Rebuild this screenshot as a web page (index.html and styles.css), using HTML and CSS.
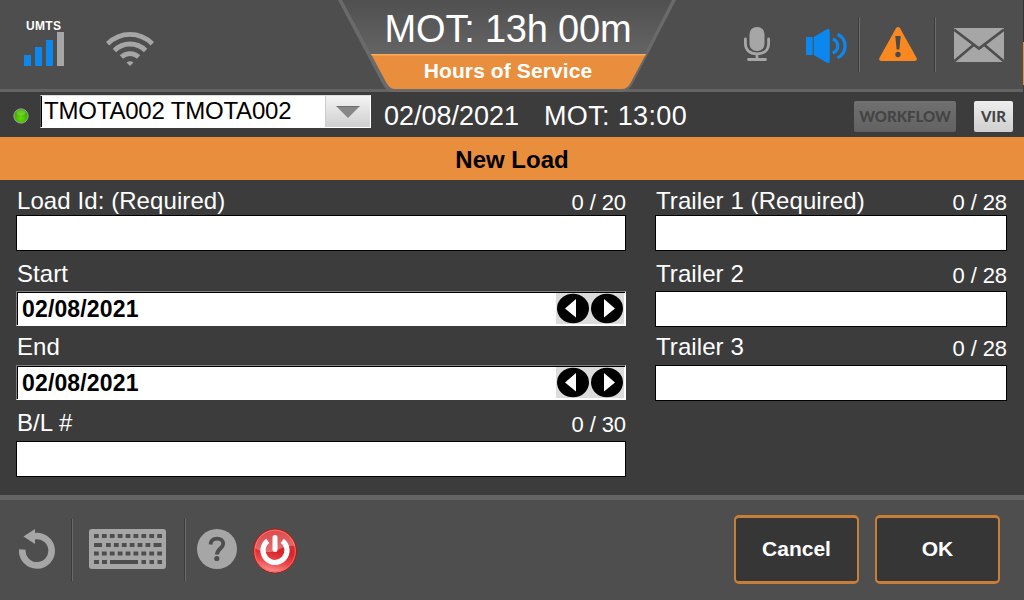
FILE: index.html
```html
<!DOCTYPE html>
<html lang="en">
<head>
<meta charset="utf-8">
<title>New Load</title>
<link rel="stylesheet" href="styles.css">
</head>
<body>
<div class="screen">
  <header class="topbar">
    <div class="status">
      <div class="signal">
        <span class="signal-label">UMTS</span>
        <svg width="40" height="34" viewBox="0 0 40 34"><g fill="#0b87ee"><path d="M0 23h7v11H0zM11 15h7v19h-7zM22 8h7v26h-7z"/></g><path fill="#a6a6a6" d="M33 0h7v34h-7z"/></svg>
      </div>
      <svg class="wifi" width="48" height="34" viewBox="0 0 48 34"><g fill="none" stroke="#a6a6a6" stroke-width="4.8"><path d="M1.600 11.700Q11.500 2.400 24 2.400t22.400 9.300"/><path d="M8.400 18.500Q15 12 24 12t15.600 6.500"/><path d="M15.400 25Q19 21.600 24 21.600t8.600 3.400"/></g><path fill="#a6a6a6" d="M20.500 30.500q3.500-2.600 7 0L24 34z"/></svg>
    </div>
    <div class="hos">
      <svg class="hos-shape" width="340" height="92" viewBox="0 0 340 92">
        <defs>
          <linearGradient id="tab" x1="0" y1="0" x2="0" y2="1"><stop offset="0" stop-color="#505050"/><stop offset="1" stop-color="#646464"/></linearGradient>
        </defs>
        <path fill="#6a6a6a" d="M0 0h338l-43 83q-4 8-11 9H55q-7-1-11-9z"/>
        <path fill="url(#tab)" d="M4 0h330l-27.500 54H33z"/>
        <path fill="#e98e3d" d="M33 54h275l-15.500 29q-3.500 6-8.500 6H57q-5 0-8.500-6z"/>
        <path fill="#fba95c" d="M33 54h275l-.8 1.500H33.800z"/>
      </svg>
      <div class="hos-time">MOT: 13h 00m</div>
      <div class="hos-name">Hours of Service</div>
    </div>
    <div class="tools">
      <svg class="mic" width="26" height="34" viewBox="0 0 26 34"><rect x="5.500" width="15" height="24" rx="7" fill="#a6a6a6"/><path fill="none" stroke="#a6a6a6" stroke-width="2.800" stroke-linecap="round" d="M1.400 12v4.500c0 6 4 10.300 11.600 10.300s11.600-4.300 11.600-10.300V12M13 27v5M4.500 32.500h17"/></svg>
      <svg class="speaker" width="42" height="34" viewBox="0 0 42 34"><path fill="#0b87ee" d="M0 8h6.700v18H0zM7.700 8L20.500.5Q23.800-.8 23.800 2v30q0 2.800-3.300 1.500L7.700 26z"/><g fill="none" stroke="#0b87ee" stroke-width="3.300"><path d="M26.700 10A7.400 7.400 0 0 1 26.700 24M31.500 5.200A13 13 0 0 1 31.500 28.800"/></g></svg>
      <i class="rule rule-top"></i>
      <svg class="warn" width="38" height="34" viewBox="0 0 38 34"><path fill="#fa8820" d="M17 1.300q2-2.600 4 0l16.500 29.500Q38.500 34 35.500 34h-33Q-.5 34 .5 30.800z"/><path fill="#4a4a4a" d="M16.300 9h5.400l-1.300 13.500h-2.800z"/><circle cx="19" cy="27.500" r="2.700" fill="#4a4a4a"/></svg>
      <i class="rule rule-top"></i>
      <svg class="mail" width="50" height="34" viewBox="0 0 50 34"><path fill="#a6a6a6" d="M0 0h50v34H0z"/><path fill="none" stroke="#4e4e4e" stroke-width="2.600" d="M0 1.500L25 20.500 50 1.500M0 33.500l19.500-16.500M50 33.500L30.500 17"/></svg>
    </div>
    <i class="edge"></i>
  </header>

  <section class="driverbar">
    <svg class="led" width="16" height="16" viewBox="0 0 16 16"><defs><radialGradient id="led" cy=".65"><stop offset="0" stop-color="#5fe000"/><stop offset="1" stop-color="#3fa800"/></radialGradient></defs><circle cx="8" cy="8" r="7.100" fill="url(#led)" stroke="#a2ac9c"/><ellipse cx="8" cy="4.800" rx="4.500" ry="2.600" fill="#8be055" opacity=".5"/></svg>
    <div class="select"><span class="select-text">TMOTA002 TMOTA002</span><span class="select-arrow"><svg width="24" height="12" viewBox="0 0 24 12"><path fill="#878787" d="M1 1h22L12 12z"/><path fill="#6d6d6d" d="M0 0h24l-1 1H1z"/></svg></span></div>
    <span class="date">02/08/2021</span>
    <span class="mot">MOT: 13:00</span>
    <button class="workflow">WORKFLOW</button>
    <button class="vir">VIR</button>
  </section>

  <h1 class="title">New Load</h1>

  <main class="form">
    <div class="col">
      <label class="label"><span>Load Id: (Required)</span><span class="count">0 / 20</span></label>
      <div class="box"></div>
      <label class="label mid"><span>Start</span></label>
      <div class="datebox"><span class="value">02/08/2021</span><span class="spin"><svg width="68" height="31" viewBox="0 0 68 31"><ellipse cx="17" cy="15.500" rx="16" ry="14.700"/><ellipse cx="51" cy="15.500" rx="16" ry="14.700"/><path fill="#fff" d="M20 6v18.500L9 15.500zM48 6v18.500L59 15.500z"/></svg></span></div>
      <label class="label low"><span>End</span></label>
      <div class="datebox"><span class="value">02/08/2021</span><span class="spin"><svg width="68" height="31" viewBox="0 0 68 31"><ellipse cx="17" cy="15.500" rx="16" ry="14.700"/><ellipse cx="51" cy="15.500" rx="16" ry="14.700"/><path fill="#fff" d="M20 6v18.500L9 15.500zM48 6v18.500L59 15.500z"/></svg></span></div>
      <label class="label last"><span>B/L #</span><span class="count">0 / 30</span></label>
      <div class="box"></div>
    </div>
    <div class="col">
      <label class="label"><span>Trailer 1 (Required)</span><span class="count">0 / 28</span></label>
      <div class="box"></div>
      <label class="label mid"><span>Trailer 2</span><span class="count">0 / 28</span></label>
      <div class="box"></div>
      <label class="label third"><span>Trailer 3</span><span class="count">0 / 28</span></label>
      <div class="box"></div>
    </div>
  </main>

  <footer class="footer">
    <svg class="undo" width="36" height="40" viewBox="0 0 36 40"><path fill="none" stroke="#a6a6a6" stroke-width="6.600" d="M3.300 20.500A14.700 14.700 0 1 0 15 7.300"/><path fill="#a6a6a6" d="M4.500 7.500L16 0v15z"/></svg>
    <i class="rule rule-a"></i>
    <svg class="keyboard" width="77" height="40" viewBox="0 0 77 40"><rect width="77" height="40" rx="3" fill="#a6a6a6"/><g fill="none" stroke="#4e4e4e" stroke-width="4"><path stroke-dasharray="4.800 3.100" d="M5 7h68"/><path d="M5 16h8M64.500 16h8"/><path stroke-dasharray="4.800 3.100" d="M17 16h45"/><path stroke-dasharray="4.800 3.100" d="M5 24.500h68"/><path d="M5 33h5M13 33h5M21 33h28M52.500 33h4.500M60.500 33h4.500M68.500 33h4.500"/></g></svg>
    <i class="rule rule-b"></i>
    <svg class="help" width="40" height="40" viewBox="0 0 40 40"><circle cx="20" cy="20" r="20" fill="#a6a6a6"/><path fill="none" stroke="#4e4e4e" stroke-width="3.800" d="M13.500 15.500c.3-3.800 2.700-5.900 6.500-5.900 3.700 0 6.200 2.100 6.200 5.200 0 4.600-6.200 5-6.200 10.700"/><circle cx="19.800" cy="29.500" r="2.600" fill="#4e4e4e"/></svg>
    <svg class="power" width="44" height="46" viewBox="0 0 44 46"><defs><linearGradient id="pw" x1=".6" y1="0" x2=".4" y2="1"><stop offset="0" stop-color="#dc4444"/><stop offset=".5" stop-color="#d8232a"/><stop offset=".75" stop-color="#ea4a4d"/><stop offset="1" stop-color="#ff9a9a"/></linearGradient><linearGradient id="gl" x1="0" y1="0" x2="0" y2="1"><stop offset="0" stop-color="#fff" stop-opacity=".05"/><stop offset="1" stop-color="#fff" stop-opacity=".36"/></linearGradient></defs><ellipse cx="22" cy="23" rx="21.500" ry="22" fill="url(#pw)" stroke="#a52014"/><ellipse cx="22" cy="23" rx="20.300" ry="20.800" fill="none" stroke="#f66b5f"/><path fill="url(#gl)" d="M2 20C4 8 12 2 22 2s18 7 20 16c-10-1-14 3-20 5-7 2-14 1-20-3z"/><path fill="none" stroke="#fff" stroke-width="5.200" d="M14.800 12.900A12 12 0 1 0 29.200 12.900"/><path fill="none" stroke="#fff" stroke-width="5" stroke-linecap="round" d="M22 9.500V21.500"/></svg>
    <button class="action cancel">Cancel</button>
    <button class="action">OK</button>
  </footer>
</div>
</body>
</html>
```
FILE: styles.css
```css
* { box-sizing: border-box; }
body { margin: 0; font-family: "Liberation Sans", Arial, sans-serif; }
svg { display: block; flex: none; }
.screen { width: 1024px; height: 600px; display: flex; flex-direction: column; overflow: hidden; background: #3c3c3c; color: #fff; white-space: nowrap; }
button { font-family: inherit; padding: 0; margin: 0; flex: none; }

.topbar { position: relative; flex: none; height: 92px; display: grid; grid-template-columns: 338px 340px 346px; background: #4e4e4e; border-bottom: 3px solid #646464; }
.status { display: flex; align-items: flex-start; padding-left: 24px; }
.signal { width: 40px; padding-top: 18px; }
.signal-label { display: block; height: 14px; line-height: 16px; font-size: 12px; font-weight: bold; padding-left: 2px; letter-spacing: 0.3px; }
.wifi { margin: 32px 0 0 42px; }
.hos { position: relative; text-align: center; }
.hos-shape { position: absolute; left: 0; top: 0; }
.hos-time { position: relative; height: 54px; line-height: 59px; font-size: 38px; letter-spacing: -0.2px; }
.hos-name { position: relative; height: 35px; line-height: 33px; font-size: 21px; font-weight: bold; letter-spacing: 0.1px; }
.tools { display: flex; align-items: flex-start; padding-left: 66px; }
.mic { margin-top: 27px; }
.speaker { margin: 29px 10px 0 36px; }
.rule { flex: none; width: 2px; background: linear-gradient(90deg, #3c3c3c 50%, #6a6a6a 50%); }
.rule-top { height: 55px; margin-top: 17px; }
.warn { margin: 27px 17px 0 19px; }
.mail { margin: 28px 0 0 18px; }
.edge { position: absolute; right: 0; top: 0; width: 1px; height: 92px; background: linear-gradient(#333 42px, #e98e3d 42px, #e98e3d 85px, #3c3c3c 85px); }

.driverbar { flex: none; height: 45px; display: flex; align-items: flex-start; padding-left: 13px; background: #3c3c3c; }
.led { margin-top: 16px; }
.select { flex: none; display: flex; width: 331px; height: 33px; margin: 3px 0 0 11px; color: #000; background: #fff; border: 1px solid #fff; border-left-color: #555; border-top-color: #ddd; }
.select-text { width: 284px; padding-left: 2px; height: 31px; line-height: 30px; font-size: 24px; letter-spacing: -0.2px; border-left: 1px solid #000; }
.select-arrow { flex: 1; display: flex; align-items: center; justify-content: center; background: linear-gradient(#f4f4f4, #cfcfcf); border-left: 1px solid #ccc; }
.date, .mot { line-height: 49px; font-size: 27px; }
.date { width: 160px; margin-left: 13px; }
.mot { width: 310px; letter-spacing: 0.35px; }
.workflow, .vir { height: 31px; margin-top: 9px; border: 0; border-radius: 2px; font-family: Lato, sans-serif; font-weight: 900; font-size: 15px; line-height: 31px; color: #444; }
.workflow { width: 102px; background: linear-gradient(#707070, #626262); }
.vir { width: 39px; margin-left: 18px; background: linear-gradient(#eee, #cfcfcf); }

.title { flex: none; margin: 0; height: 43px; line-height: 45px; font-size: 24px; text-align: center; color: #000; background: #e98e3d; }

.form { flex: none; height: 315px; display: grid; grid-template-columns: 610px 352px; column-gap: 29px; padding-left: 16px; align-items: start; }
.col { display: flex; flex-direction: column; }
.label { display: flex; justify-content: space-between; height: 35px; padding: 6px 0 0 1px; line-height: 30px; font-size: 24px; letter-spacing: 0.08px; }
.count { font-size: 22px; line-height: 33px; letter-spacing: -0.1px; }
.mid { height: 40px; padding-top: 8px; }
.low { height: 39px; padding-top: 6px; }
.third { height: 38px; padding-top: 5px; }
.last { height: 41px; padding-top: 8px; }
.box { height: 36px; background: #fff; border: 1px solid #000; }
.datebox { display: flex; height: 35px; background: #fff; border: 1px solid #fff; border-top-color: #808080; border-left-color: #808080; box-shadow: inset 1px 1px #000; color: #000; }
.value { flex: 1; padding-left: 5px; line-height: 34px; font-size: 23px; font-weight: bold; letter-spacing: 0.15px; }
.spin { height: 31px; margin: 1px 1px 0 0; background: #dcdcdc; }

.footer { flex: none; height: 105px; display: flex; align-items: flex-start; padding-left: 19px; background: #4e4e4e; border-top: 5px solid #646464; }
.undo { margin-top: 29px; }
.rule-a, .rule-b { height: 62px; margin-top: 19px; }
.rule-a { margin-left: 16px; }
.rule-b { margin-left: 18px; }
.keyboard { margin: 29px 0 0 16px; }
.help { margin: 29px 0 0 11px; }
.power { margin: 28px 0 0 16px; }
.action { width: 125px; height: 69px; margin: 15px 0 0 16px; padding-bottom: 2px; background: #363636; border: solid #c77e38; border-width: 3px 2px; border-radius: 5px; color: #fff; font-size: 21px; font-weight: bold; }
.cancel { margin-left: 437px; }
```
